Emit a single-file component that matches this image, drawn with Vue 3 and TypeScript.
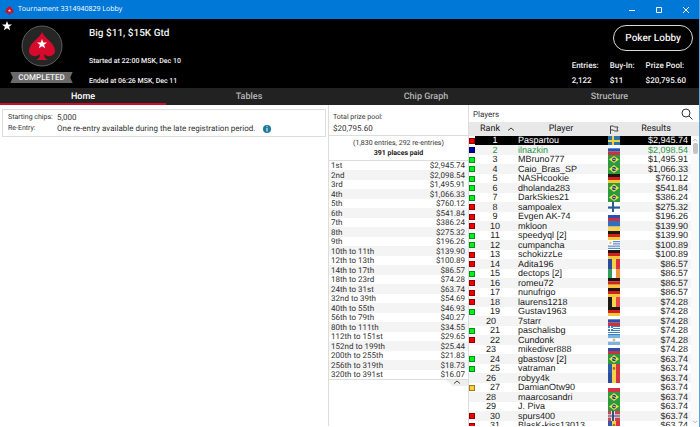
<script setup lang="ts">
import { ref } from 'vue'

interface Shape { d: string; fill: string }
interface Player { rank: number; name: string; flag: string; prize: string; status: string }

const bar = (x: number, y: number, w: number, h: number, fill: string): Shape => ({
  d: `M${x} ${y}h${w}v${h}h${-w}z`,
  fill,
})
const horizontal = (a: string, b: string, c: string): Shape[] => [bar(0, 0, 12, 3, a), bar(0, 3, 12, 3, b), bar(0, 6, 12, 3, c)]
const vertical = (a: string, b: string, c: string): Shape[] => [bar(0, 0, 4, 9, a), bar(4, 0, 4, 9, b), bar(8, 0, 4, 9, c)]
const cross = (field: string, line: string): Shape[] => [bar(0, 0, 12, 9, field), bar(4, 0, 2, 9, line), bar(0, 4, 12, 2, line)]
const disc = (x: number, y: number, r: number, fill: string): Shape => ({
  d: `M${x - r} ${y}a${r} ${r} 0 1 0 ${2 * r} 0a${r} ${r} 0 1 0 ${-2 * r} 0z`,
  fill,
})

const flags: Record<string, Shape[]> = {
  se: cross('#2c77a5', '#f0d04a'),
  fi: cross('#ffffff', '#2b5b94'),
  no: [bar(0, 0, 12, 9, '#d2424a'), bar(3, 0, 4, 9, '#e6dce4'), bar(0, 3, 12, 3, '#e6dce4'), bar(4, 0, 2, 9, '#35507f'), bar(0, 4, 12, 1, '#35507f')],
  ru: horizontal('#ffffff', '#2a4fb0', '#c8323f'),
  de: horizontal('#1c1512', '#d2201c', '#f5c63c'),
  br: [bar(0, 0, 12, 9, '#2a9a3c'), { d: 'M6 1L11 4.5L6 8L1 4.5z', fill: '#e9df4e' }, disc(6, 4.5, 2, '#26416b'), { d: 'M4.5 3.6L7.8 4.8V5.4L4.5 4.3z', fill: '#dfe8ee' }],
  ua: [bar(0, 0, 12, 5, '#2f6fc0'), bar(0, 5, 12, 4, '#f7d552')],
  uy: [bar(0, 0, 12, 9, '#ffffff'), bar(5, 1, 7, 1, '#4a80c0'), bar(5, 3, 7, 1, '#4a80c0'), bar(0, 5, 12, 1, '#4a80c0'), bar(0, 7, 12, 1, '#4a80c0'), disc(2.5, 2.5, 1.2, '#e8c65a')],
  ro: vertical('#2a4c9c', '#f5d04a', '#d6343f'),
  md: [...vertical('#2e5aa8', '#f5cf4c', '#d6343f'), disc(6, 4.5, 1.4, '#a8702e')],
  ie: vertical('#2f9f5a', '#ffffff', '#f09440'),
  be: vertical('#1d1a18', '#f7d548', '#e8484c'),
  gr: [bar(0, 0, 12, 9, '#3c82c0'), bar(5, 1, 7, 1, '#ffffff'), bar(5, 3, 7, 1, '#ffffff'), bar(0, 5, 12, 1, '#ffffff'), bar(0, 7, 12, 1, '#ffffff'), bar(2, 0, 1, 5, '#ffffff'), bar(0, 2, 5, 1, '#ffffff')],
  ar: [...horizontal('#7db1de', '#ffffff', '#7db1de'), disc(6, 4.5, 1.3, '#d9b765')],
  pl: [bar(0, 0, 12, 5, '#ffffff'), bar(0, 5, 12, 4, '#d63048')],
}

const players: Player[] = (
  [
    ['Paspartou', 'se', '$2,945.74', 'red'],
    ['ilnazkin', 'ru', '$2,098.54', 'navy'],
    ['MBruno777', 'br', '$1,495.91', 'green'],
    ['Caio_Bras_SP', 'br', '$1,066.33', 'green'],
    ['NASHcookie', 'de', '$760.12', 'green'],
    ['dholanda283', 'br', '$541.84', 'green'],
    ['DarkSkies21', 'br', '$386.24', 'green'],
    ['sampoalex', 'fi', '$275.32', 'red'],
    ['Evgen AK-74', 'ru', '$196.26', 'red'],
    ['mkloon', 'ua', '$139.90', 'red'],
    ['speedyql [2]', 'de', '$139.90', 'green'],
    ['cumpancha', 'uy', '$100.89', 'green'],
    ['schokizzLe', 'de', '$100.89', 'red'],
    ['Adita196', 'ro', '$86.57', 'red'],
    ['dectops [2]', 'ie', '$86.57', 'green'],
    ['romeu72', 'de', '$86.57', 'red'],
    ['nunufrigo', 'de', '$86.57', 'red'],
    ['laurens1218', 'be', '$74.28', 'red'],
    ['Gustav1963', 'de', '$74.28', 'green'],
    ['7starr', 'ru', '$74.28', ''],
    ['paschalisbg', 'gr', '$74.28', 'green'],
    ['Cundonk', 'ar', '$74.28', 'red'],
    ['mikediver888', 'ru', '$74.28', ''],
    ['gbastosv [2]', 'br', '$63.74', 'green'],
    ['vatraman', 'md', '$63.74', 'green'],
    ['robyy4k', 'ro', '$63.74', ''],
    ['DamianOtw90', 'pl', '$63.74', 'yellow'],
    ['maarcosandri', 'br', '$63.74', ''],
    ['J. Piva', 'br', '$63.74', ''],
    ['spurs400', 'no', '$63.74', 'red'],
    ['BlasK-kiss13013', 'md', '$63.74', 'red'],
  ] as [string, string, string, string][]
).map(([name, flag, prize, status], i) => ({ rank: i + 1, name, flag, prize, status }))

const payouts: [string, string][] = [
  ['1st', '$2,945.74'], ['2nd', '$2,098.54'], ['3rd', '$1,495.91'], ['4th', '$1,066.33'],
  ['5th', '$760.12'], ['6th', '$541.84'], ['7th', '$386.24'], ['8th', '$275.32'],
  ['9th', '$196.26'], ['10th to 11th', '$139.90'], ['12th to 13th', '$100.89'],
  ['14th to 17th', '$86.57'], ['18th to 23rd', '$74.28'], ['24th to 31st', '$63.74'],
  ['32nd to 39th', '$54.69'], ['40th to 55th', '$46.93'], ['56th to 79th', '$40.27'],
  ['80th to 111th', '$34.55'], ['112th to 151st', '$29.65'], ['152nd to 199th', '$25.44'],
  ['200th to 255th', '$21.83'], ['256th to 319th', '$18.73'], ['320th to 391st', '$16.07'],
]

const stats = [
  { label: 'Entries:', value: '2,122' },
  { label: 'Buy-In:', value: '$11' },
  { label: 'Prize Pool:', value: '$20,795.60' },
]

const tabs = ['Home', 'Tables', 'Chip Graph', 'Structure']
const activeTab = ref('Home')
const selectedRank = ref(1)
const payoutsOpen = ref(true)

const spade = 'M20 8C22 14 33 19 33 27C33 32 26 34 22 30C22 33 23 35 26 36H14C17 35 18 33 18 30C14 34 7 32 7 27C7 19 18 14 20 8z'
const star = 'M0-5L1.3-1.6L5-1.5L2.1.8L3.1 4.3L0 2.2L-3.1 4.3L-2.1.8L-5-1.5L-1.3-1.6z'
</script>

<template>
  <div class="window">
    <div class="titlebar">
      <svg class="app-icon" viewBox="6 7 28 30"><path :d="spade" fill="#c8102e" /><path :d="star" transform="translate(20 24)" fill="#fff" /></svg>
      <span class="window-title">Tournament 3314940829 Lobby</span>
      <div class="window-controls">
        <button type="button" aria-label="Minimize"><svg viewBox="0 0 8 8"><path d="M1 4.5h6" /></svg></button>
        <button type="button" aria-label="Maximize"><svg viewBox="0 0 8 8"><path d="M1.5 1.5h5v5h-5z" /></svg></button>
        <button type="button" aria-label="Close"><svg viewBox="0 0 8 8"><path d="M1 1l6 6M7 1l-6 6" /></svg></button>
      </div>
    </div>

    <header class="header">
      <button type="button" class="favorite" aria-label="Favorite">
        <svg viewBox="-5 -5 10 10"><path :d="star" fill="#fff" /></svg>
      </button>
      <div class="badge">
        <svg class="logo" viewBox="0 0 42 42">
          <circle cx="21" cy="21" r="20" fill="#262626" stroke="#5c5c5c" />
          <g transform="translate(1 -1)">
            <path :d="spade" fill="#d70a2c" />
            <path :d="star" transform="translate(20 20)" fill="#fff" />
          </g>
        </svg>
        <span class="ribbon">COMPLETED</span>
      </div>
      <div class="details">
        <h1>Big $11, $15K Gtd</h1>
        <p>Started at 22:00 MSK, Dec 10</p>
        <p>Ended at 06:26 MSK, Dec 11</p>
      </div>
      <div class="summary">
        <button type="button" class="lobby">Poker Lobby</button>
        <dl class="stats">
          <div v-for="s in stats" :key="s.label">
            <dt>{{ s.label }}</dt>
            <dd>{{ s.value }}</dd>
          </div>
        </dl>
      </div>
    </header>

    <nav class="tabs">
      <button v-for="t in tabs" :key="t" type="button" :class="{ active: t === activeTab }" @click="activeTab = t">{{ t }}</button>
    </nav>

    <main class="content">
      <section class="info">
        <dl class="info-box">
          <dt>Starting chips:</dt>
          <dd>5,000</dd>
          <dt>Re-Entry:</dt>
          <dd>
            One re-entry available during the late registration period.
            <svg class="info-icon" viewBox="0 0 8 8"><circle cx="4" cy="4" r="4" fill="#1a7a9c" /><path d="M3.5 1.3h1v1h-1zM3.5 3h1v3.5h-1z" fill="#fff" /></svg>
          </dd>
        </dl>
      </section>

      <section class="prizes">
        <div class="pool">
          <div class="pool-label">Total prize pool:</div>
          <div>$20,795.60</div>
        </div>
        <div class="places">
          <div>(1,830 entries, 292 re-entries)</div>
          <strong>391 places paid</strong>
        </div>
        <table v-show="payoutsOpen" class="payouts">
          <tbody>
            <tr v-for="[place, amount] in payouts" :key="place">
              <td>{{ place }}</td>
              <td>{{ amount }}</td>
            </tr>
          </tbody>
        </table>
        <button type="button" class="collapse" aria-label="Toggle payouts" @click="payoutsOpen = !payoutsOpen">
          <svg viewBox="0 0 8 4"><path d="M1 3.5L4 1l3 2.5" /></svg>
        </button>
      </section>

      <section class="players">
        <div class="players-title">
          <h2>Players</h2>
          <button type="button" aria-label="Search players">
            <svg viewBox="0 0 12 12"><circle cx="5" cy="5" r="4" /><path d="M8 8l3.5 3.5" /></svg>
          </button>
        </div>
        <div class="players-body">
          <table>
            <colgroup>
              <col class="c-status" /><col class="c-rank" /><col class="c-name" /><col class="c-flag" /><col /><col class="c-scroll" />
            </colgroup>
            <thead>
              <tr>
                <th colspan="2"><span class="rank-head">Rank <svg viewBox="0 0 8 4"><path d="M1 3.5L4 1l3 2.5" /></svg></span></th>
                <th>Player</th>
                <th><svg class="flag-head" viewBox="0 0 10 9"><path d="M1.5 9V1h3l1 1h3.5l-1 2l1 2h-3.5l-1-1h-3" /></svg></th>
                <th>Results</th>
                <th></th>
              </tr>
            </thead>
            <tbody>
              <tr
                v-for="p in players"
                :key="p.rank"
                :class="{ selected: p.rank === selectedRank, self: p.rank === 2 }"
                @click="selectedRank = p.rank"
              >
                <td><i v-if="p.status" class="status" :class="p.status"></i></td>
                <td class="rank" :class="{ out: !p.status }">{{ p.rank }}</td>
                <td class="name">{{ p.name }}</td>
                <td class="flag">
                  <svg viewBox="0 0 12 9" preserveAspectRatio="none"><path v-for="(s, i) in flags[p.flag]" :key="i" :d="s.d" :fill="s.fill" /></svg>
                </td>
                <td class="result">{{ p.prize }}</td>
                <td class="gutter"></td>
              </tr>
            </tbody>
          </table>
          <div class="scrollbar">
            <svg viewBox="0 0 8 4"><path d="M1 3.5L4 1l3 2.5" /></svg>
            <div class="thumb"></div>
            <svg class="down" viewBox="0 0 8 4"><path d="M1 .5L4 3l3-2.5" /></svg>
          </div>
        </div>
      </section>
    </main>
  </div>
</template>

<style>
body { margin: 0; }
</style>

<style scoped>
.window {
  box-sizing: border-box;
  display: flex;
  flex-direction: column;
  height: 100vh;
  overflow: hidden;
  border-right: 1px solid #5ba3dc;
  background: #fff;
  color: #333;
  font-family: Roboto, sans-serif;
  font-size: 9px;
  line-height: 11px;
  text-rendering: geometricPrecision;
}
button {
  margin: 0;
  padding: 0;
  border: 0;
  background: none;
  color: inherit;
  font: inherit;
  text-rendering: inherit;
}
h1, h2, p, dl, dd { margin: 0; }
svg { display: block; fill: none; }

.titlebar {
  display: flex;
  flex: none;
  align-items: center;
  gap: 4px;
  height: 19px;
  padding-left: 5px;
  background: #0078d7;
  color: #fff;
}
.app-icon { width: 9px; height: 10px; }
.window-title { font-family: "Open Sans", sans-serif; font-size: 7px; }
.window-controls { display: flex; margin-left: auto; }
.window-controls button { display: grid; place-items: center; width: 27px; height: 19px; }
.window-controls svg { width: 8px; height: 8px; stroke: #fff; stroke-width: 1; }

.header {
  display: flex;
  flex: none;
  box-sizing: border-box;
  height: 69px;
  background: #000;
  color: #f2f2f2;
  font-weight: 500;
}
.favorite { align-self: flex-start; padding: 2px 0 0 2px; }
.favorite svg { width: 10px; height: 10px; }
.badge {
  display: flex;
  flex-direction: column;
  align-items: center;
  justify-content: space-between;
  box-sizing: border-box;
  width: 59px;
  padding: 6px 0 5px;
}
.logo { width: 42px; height: 42px; }
.ribbon {
  padding: 0 8px;
  background: #6a6a6a;
  clip-path: polygon(0 0, 100% 0, 96% 50%, 100% 100%, 0 100%, 4% 50%);
  font-size: 8px;
}
.details { padding: 8px 0 0 18px; }
.details h1 { margin-bottom: 16px; font-size: 10px; font-weight: 500; line-height: 13px; }
.details p { margin-bottom: 9px; font-size: 7px; }
.summary {
  display: flex;
  flex-direction: column;
  align-items: flex-end;
  gap: 9px;
  margin-left: auto;
  padding: 6px 6px 0 0;
}
.lobby {
  box-sizing: border-box;
  height: 26px;
  padding: 0 11px;
  border: 1px solid #d8d8d8;
  border-radius: 13px;
  font-size: 10px;
}
.stats { display: flex; gap: 11px; padding-right: 7px; font-size: 8px; }
.stats dd { margin-top: 4px; }

.tabs {
  display: grid;
  flex: none;
  grid-template-columns: 166fr 166fr 188fr 179fr;
  height: 17px;
  background: #222;
  color: #b4b4b4;
}
.tabs button { padding-top: 3px; border-bottom: 2px solid transparent; font-weight: 500; }
.tabs .active { border-color: #c8102e; color: #fff; }

.content {
  display: grid;
  flex: 1;
  grid-template-columns: 328fr 140fr 231fr;
  min-height: 0;
  padding-bottom: 1px;
}

.info { padding: 4px 2px; }
.info-box {
  display: grid;
  grid-template-columns: 49px 1fr;
  padding: 2px 5px;
  border: 1px solid #ddd;
}
.info-box dt { font-size: 7px; white-space: nowrap; }
.info-box dd { display: flex; align-items: center; gap: 8px; font-size: 8px; }
.info-icon { width: 8px; height: 8px; }

.prizes { display: flex; flex-direction: column; border-left: 1px solid #ddd; }
.pool { padding: 7px 4px 1px; border-bottom: 1px solid #ddd; font-size: 8px; }
.pool-label { font-size: 7px; }
.places { padding: 2px 0; border-bottom: 1px solid #ddd; font-size: 7px; line-height: 10px; text-align: center; }
.places strong { color: #222; font-weight: 700; }
.payouts { border-collapse: collapse; border-bottom: 1px solid #ddd; color: #333; font-size: 8px; line-height: 9px; }
.payouts tr { height: 9px; }
.payouts tr:nth-child(even) { height: 10px; background: #f4f4f4; }
.payouts td { padding: 0 3px 0 2px; }
.payouts td:last-child { text-align: right; }
.collapse {
  display: flex;
  align-self: flex-end;
  justify-content: center;
  width: 22px;
  height: 6px;
  background: #eee;
  clip-path: polygon(0 0, 100% 0, 100% 100%, 30% 100%);
}
.collapse svg { width: 8px; height: 4px; stroke: #444; }

.players { display: flex; flex-direction: column; min-height: 0; border-left: 1px solid #ddd; }
.players-title {
  display: flex;
  flex: none;
  align-items: center;
  justify-content: space-between;
  height: 17px;
  padding: 1px 6px 0 4px;
  box-sizing: border-box;
}
.players-title h2 { font-size: 8px; font-weight: 400; }
.players-title svg { width: 12px; height: 12px; stroke: #333; stroke-width: 1; }
.players-body { position: relative; flex: 1; min-height: 0; overflow: hidden; }
.players table {
  width: 100%;
  table-layout: fixed;
  border-collapse: collapse;
  color: #222;
  font-family: "Liberation Sans", sans-serif;
  font-size: 9px;
  line-height: 9px;
}
.c-status { width: 6px; }
.c-rank { width: 40px; }
.c-name { width: 92px; }
.c-flag { width: 14px; }
.c-scroll { width: 8px; }
.players th { height: 14px; padding: 0; background: #e8e8e8; font-family: Roboto, sans-serif; font-weight: 400; }
.rank-head { display: flex; align-items: center; justify-content: flex-end; gap: 7px; }
.rank-head svg { width: 8px; height: 4px; stroke: #444; }
.flag-head { width: 10px; height: 9px; margin: 0 auto; stroke: #444; }
.players tbody tr { height: 9px; }
.players tbody tr:nth-child(even) { height: 10px; }
.players tbody tr:nth-child(even) td { background: #f4f4f4; }
.players td { padding: 0; white-space: nowrap; }
.players .self { color: #2a9646; }
.players .selected { color: #fff; }
.players .selected td:not(:first-child, .gutter) { background: #000; }
.status { display: block; box-sizing: border-box; width: 6px; height: 6px; border: 1px solid rgb(0 0 0 / 40%); }
.red { background: #f00000; }
.green { background: #00f020; }
.navy { background: #0000a0; }
.yellow { background: #ffd030; }
.rank { text-align: center; }
.players .out { padding-right: 8px; }
.players .name { padding-left: 3px; }
.flag svg { width: 12px; height: 9px; margin: 0 auto; }
tr:nth-child(even) .flag svg { height: 10px; }
.players .result { padding-right: 3px; text-align: right; }
.scrollbar {
  position: absolute;
  top: 14px;
  right: 0;
  bottom: 0;
  display: flex;
  flex-direction: column;
  align-items: center;
  width: 8px;
  padding: 2px 0;
  box-sizing: border-box;
  background: #fafafa;
}
.scrollbar svg { width: 6px; height: 4px; stroke: #aaa; }
.thumb { width: 5px; height: 11px; margin-top: 1px; border-radius: 2px; background: #c4c4c4; }
.scrollbar .down { margin-top: auto; }
</style>
